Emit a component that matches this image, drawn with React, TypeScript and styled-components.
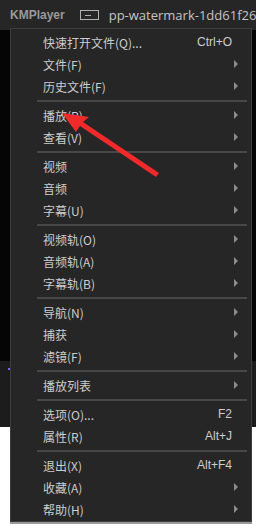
import React from 'react';
import styled, { createGlobalStyle } from 'styled-components';

const GlobalStyle = createGlobalStyle`
  html, body {
    margin: 0;
    padding: 0;
    background: #ffffff;
    font-family: "Noto Sans CJK SC", "Liberation Sans", sans-serif;
  }
`;

const Screen = styled.div`
  position: relative;
  width: 256px;
  height: 525px;
  overflow: hidden;
  background: #ffffff;
`;

const TopBar = styled.div`
  height: 30px;
  display: flex;
  align-items: center;
  padding-left: 10px;
  background: #262626;
  white-space: nowrap;
  overflow: hidden;
`;

const Brand = styled.span`
  font-family: "Liberation Sans", Arial, sans-serif;
  font-weight: 700;
  font-size: 12px;
  color: #9a9a9a;
`;

const WinIcon = styled.span`
  flex-shrink: 0;
  width: 19px;
  height: 10px;
  margin-left: 15px;
  border: 1px solid #b0b0b0;
  display: flex;
  align-items: center;
  padding-left: 4px;
  box-sizing: border-box;

  &::before {
    content: '';
    width: 6px;
    height: 1px;
    background: #b0b0b0;
  }
`;

const Title = styled.span`
  font-family: "Open Sans", "Liberation Sans", sans-serif;
  font-size: 13px;
  color: #c4c4c4;
  margin-left: 10px;
`;

const Stage = styled.div`
  height: 397px;
  display: flex;
  flex-direction: column;
  background: #050505;
`;

const Video = styled.div`
  flex: 1;
`;

const ControlBar = styled.div`
  height: 66px;
  background: #1c1c1c;
  padding: 7px 0 0 8px;
  box-sizing: border-box;
`;

const Dot = styled.span`
  display: block;
  width: 2px;
  height: 2px;
  background: #8a5cf0;
`;

const Menu = styled.div`
  position: absolute;
  left: 10px;
  top: 28px;
  width: 242px;
  height: 494px;
  box-sizing: border-box;
  background: #262626;
  border: 1px solid #3d3d3d;
  padding: 2px 0 1px;
  box-shadow: 0 2px 0 #9a9a9a;
`;

const Item = styled.div`
  height: 22px;
  display: flex;
  align-items: center;
  padding: 0 9px 0 32px;
  font-size: 12px;
  color: #cdcdcd;
`;

const Label = styled.span`
  flex: 1;
  white-space: nowrap;
`;

const Shortcut = styled.span`
  font-family: "Liberation Sans", Arial, sans-serif;
  font-size: 12px;
  color: #cdcdcd;
  margin-right: 10px;
`;

const Arrow = styled.span`
  width: 0;
  height: 0;
  border-top: 4px solid transparent;
  border-bottom: 4px solid transparent;
  border-left: 4px solid #8c8c8c;
  margin-right: 4px;
`;

const Separator = styled.div`
  height: 7px;
  display: flex;
  align-items: center;
  padding: 0 4px 0 26px;

  &::after {
    content: '';
    flex: 1;
    height: 2px;
    background: #474747;
  }
`;

const Pointer = styled.svg`
  position: absolute;
  left: 55px;
  top: 105px;
`;

type Entry = { label: string; shortcut?: string; sub?: boolean } | 'sep';

const entries: Entry[] = [
  { label: '快速打开文件(Q)...', shortcut: 'Ctrl+O' },
  { label: '文件(F)', sub: true },
  { label: '历史文件(F)', sub: true },
  'sep',
  { label: '播放(P)', sub: true },
  { label: '查看(V)', sub: true },
  'sep',
  { label: '视频', sub: true },
  { label: '音频', sub: true },
  { label: '字幕(U)', sub: true },
  'sep',
  { label: '视频轨(O)', sub: true },
  { label: '音频轨(A)', sub: true },
  { label: '字幕轨(B)', sub: true },
  'sep',
  { label: '导航(N)', sub: true },
  { label: '捕获', sub: true },
  { label: '滤镜(F)', sub: true },
  'sep',
  { label: '播放列表', sub: true },
  'sep',
  { label: '选项(O)...', shortcut: 'F2' },
  { label: '属性(R)', shortcut: 'Alt+J' },
  'sep',
  { label: '退出(X)', shortcut: 'Alt+F4' },
  { label: '收藏(A)', sub: true },
  { label: '帮助(H)', sub: true },
];

export default function App() {
  return (
    <>
      <GlobalStyle />
      <Screen>
        <TopBar>
          <Brand>KMPlayer</Brand>
          <WinIcon />
          <Title>pp-watermark-1dd61f26-4</Title>
        </TopBar>
        <Stage>
          <Video />
          <ControlBar>
            <Dot />
          </ControlBar>
        </Stage>

        <Menu>
          {entries.map((e, i) =>
            e === 'sep' ? (
              <Separator key={i} />
            ) : (
              <Item key={i}>
                <Label>{e.label}</Label>
                {e.shortcut && <Shortcut>{e.shortcut}</Shortcut>}
                {e.sub && <Arrow />}
              </Item>
            )
          )}
        </Menu>

        <Pointer width="110" height="75" viewBox="0 0 110 75">
          <polygon points="7,8 34,12 28,17 104,68 101,72 25,21 21,27" fill="#f02a2a" />
        </Pointer>
      </Screen>
    </>
  );
}
